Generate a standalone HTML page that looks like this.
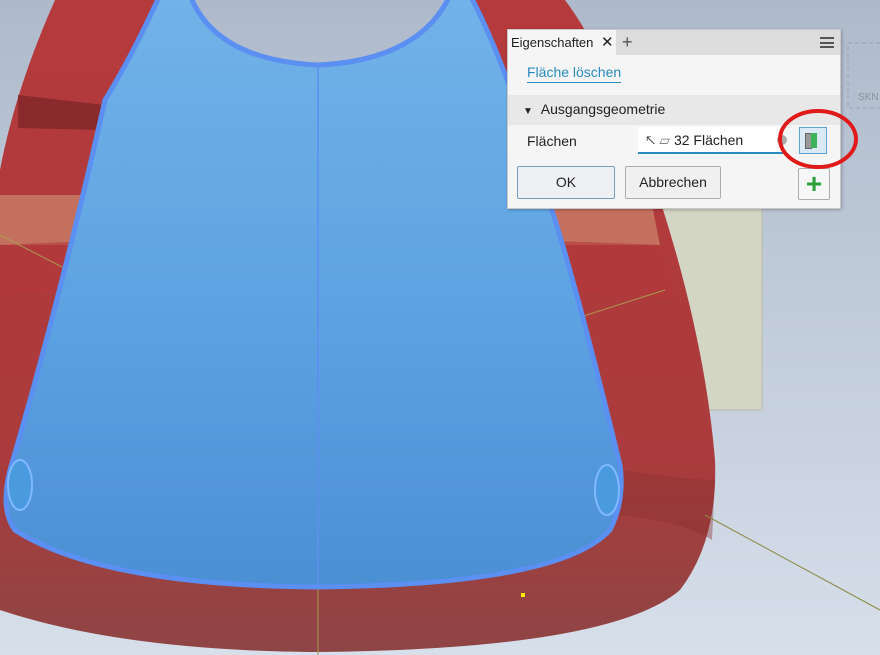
<!DOCTYPE html>
<html><head><meta charset="utf-8"><style>
body{margin:0;width:880px;height:655px;overflow:hidden;position:relative;font-family:"Liberation Sans",sans-serif;}
svg.bg{position:absolute;left:0;top:0}
.dlg{position:absolute;left:507px;top:29px;width:332px;height:178px;background:#f5f5f5;border:1px solid #c8c8c8;box-shadow:1px 1px 3px rgba(0,0,0,.25);font-size:14px;color:#222}
.tabbar{height:25px;background:#dcdcdc;position:relative}
.tab{position:absolute;left:0;top:0;width:108px;height:25px;background:#f5f5f5;font-size:13px;line-height:25px;padding-left:3px;box-sizing:border-box}
.abs{position:absolute}
.btn{position:absolute;border:1px solid #adadad;border-radius:2px;background:#f0f0f0;text-align:center;line-height:30px;font-size:14px;box-sizing:border-box}
</style></head><body>
<svg class="bg" width="880" height="655" viewBox="0 0 880 655">
<defs>
<linearGradient id="g" gradientUnits="userSpaceOnUse" x1="0" y1="0" x2="0" y2="655"><stop offset="0" stop-color="#aebacb"/><stop offset="1" stop-color="#d6dfea"/></linearGradient>
<linearGradient id="b" x1="0" y1="0" x2="0" y2="1"><stop offset="0" stop-color="#72b2e8"/><stop offset="0.5" stop-color="#5ea4e2"/><stop offset="1" stop-color="#4b8fd4"/></linearGradient>
<linearGradient id="r" x1="0" y1="0" x2="0" y2="1"><stop offset="0" stop-color="#b53a3c"/><stop offset="0.7" stop-color="#ab3b3c"/><stop offset="1" stop-color="#8e4545"/></linearGradient>
</defs>
<rect width="880" height="655" fill="url(#g)"/>
<rect x="575" y="205" width="187" height="205" fill="#d3d5c5" stroke="#b9b9a8"/>
<path d="M55 0 L565 0 Q610 60 660 200 Q705 340 715 460 Q718 540 680 590 Q610 650 310 652 Q120 650 0 610 L0 170 Q15 90 55 0Z" fill="url(#r)"/>
<path d="M0 195 L650 195 L660 245 L0 245Z" fill="#c77762" opacity=".9"/>
<path d="M0 245 Q300 230 660 245 L675 300 Q330 270 0 295Z" fill="#b2393b" opacity=".6"/>
<path d="M18 95 L105 105 L103 130 L18 128Z" fill="#8a2a2c"/>
<path d="M620 470 Q690 480 715 480 L712 540 Q680 520 615 515Z" fill="#8a2f30" opacity=".4"/>
<line x1="318" y1="0" x2="318" y2="655" stroke="#a89a50" stroke-width="1"/>
<line x1="0" y1="235" x2="320" y2="400" stroke="#a89a50" stroke-width="1"/>
<line x1="320" y1="400" x2="665" y2="290" stroke="#a89a50" stroke-width="1"/>
<line x1="705" y1="515" x2="880" y2="610" stroke="#8a8a40" stroke-width="1"/>
<path d="M160 -5 Q130 60 105 100 Q60 300 10 470 Q0 510 15 530 Q100 585 315 587 Q560 585 610 530 Q625 500 620 465 Q580 300 555 220 Q505 60 470 -5 L450 -5 Q420 60 318 65 Q215 60 190 -5Z" fill="url(#b)" stroke="#5b8ff2" stroke-width="5"/>
<path d="M190 -5 Q215 60 318 65 Q420 60 450 -5Z" fill="url(#g)"/>
<path d="M190 -5 Q215 60 318 65 Q420 60 450 -5" fill="none" stroke="#5b8ff2" stroke-width="5"/>
<line x1="318" y1="65" x2="318" y2="585" stroke="#5b8ff2" stroke-width="1.5"/>
<ellipse cx="20" cy="485" rx="12" ry="25" fill="#4a9ae0" stroke="#7fb8ff" stroke-width="2"/>
<ellipse cx="607" cy="490" rx="12" ry="25" fill="#4a9ae0" stroke="#7fb8ff" stroke-width="2"/>
<rect x="521" y="593" width="4" height="4" fill="#ffee00"/>
<rect x="848" y="43" width="40" height="65" fill="none" stroke="#9aa3ad" stroke-dasharray="4 3"/>
<text x="858" y="100" font-size="10" fill="#8c939b" font-family="Liberation Sans">SKN</text>
</svg>
<div class="dlg">
<div class="tabbar"><div class="tab">Eigenschaften <span style="font-size:15px;margin-left:4px">✕</span></div>
<div class="abs" style="left:114px;top:0;line-height:25px;font-size:18px;color:#555">+</div>
<div class="abs" style="right:6px;top:7px;width:14px;height:11px;border-top:2px solid #555;border-bottom:2px solid #555;box-sizing:border-box"><div style="border-top:2px solid #555;margin-top:2.5px"></div></div></div>
<div class="abs" style="left:19px;top:34px;color:#2a8bc0;border-bottom:1px solid #2a8bc0;padding-bottom:2px">Fläche löschen</div>
<div class="abs" style="left:0;top:65px;width:332px;height:30px;background:#e8e8e8;line-height:28px"><span style="margin-left:15px;font-size:10px">▼</span> <span style="margin-left:4px">Ausgangsgeometrie</span></div>
<div class="abs" style="left:19px;top:103px">Flächen</div>
<div class="abs" style="left:130px;top:97px;width:145px;height:27px;background:#fff;border-bottom:2px solid #2a8bc0;box-sizing:border-box;line-height:27px">
<span style="margin-left:8px">🡔</span><span style="color:#777;margin-left:4px">▱</span> 32 Flächen
<span class="abs" style="right:-4px;top:8px;width:10px;height:10px;border-radius:50%;background:#aaa"></span></div>
<div class="abs" style="left:291px;top:97px;width:28px;height:27px;border:1px solid #5ea2d2;background:#dbe9f5;box-sizing:border-box">
<div class="abs" style="left:5px;top:5px;width:5px;height:14px;background:#999;border:1px solid #666"></div><div class="abs" style="left:11px;top:5px;width:6px;height:15px;background:#3cb35a"></div></div>
<div class="btn" style="left:9px;top:136px;width:98px;height:33px;border-color:#7a9cbf;background:#eef0f3">OK</div>
<div class="btn" style="left:117px;top:136px;width:96px;height:33px">Abbrechen</div>
<div class="btn" style="left:290px;top:138px;width:32px;height:32px;background:#f7f7f7;color:#2aa03c;font-size:28px;font-weight:bold;line-height:29px">+</div>
</div>
<svg class="bg" width="880" height="655" style="pointer-events:none"><ellipse cx="818" cy="139" rx="38" ry="28" fill="none" stroke="#e01a1a" stroke-width="4"/></svg>
</body></html>
